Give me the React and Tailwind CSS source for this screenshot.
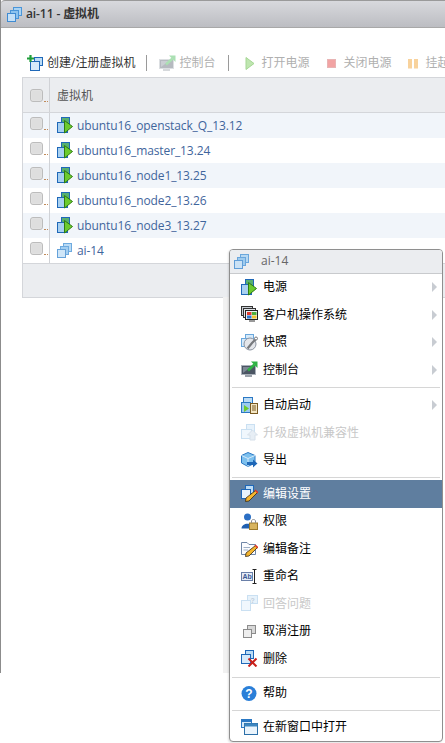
import React from "react";

const FONT = "font-['Open_Sans','Noto_Sans_CJK_SC',sans-serif]";

// stacked blue squares, used by most vm icons
const Squares = ({ pale }) => (
  <g opacity={pale ? 0.8 : 1}>
    <rect x="6.5" y="1.5" width="8" height="8" fill="#a9d3f3" stroke="#4a95d8" />
    <rect x="3.5" y="4.5" width="8" height="8" fill="#8cc3ee" stroke="#4a95d8" />
    <rect x="0.5" y="7.5" width="8" height="8" fill="#c4e0f7" stroke="#3f8bd2" />
  </g>
);

const Svg = ({ children, className = "" }) => (
  <svg width="17" height="17" viewBox="0 0 17 17" className={`shrink-0 ${className}`}>
    {children}
  </svg>
);

const VmOn = () => (
  <Svg>
    <rect x="4.5" y="0.5" width="8" height="8" fill="#58b070" stroke="#1f68b8" />
    <rect x="0.5" y="5.5" width="10" height="10" fill="#a8d0f0" stroke="#1f68b8" />
    <path d="M7.5 3.5 L15.5 9.5 L7.5 16 Z" fill="#6ccb2e" stroke="#2f7d12" />
  </Svg>
);

const VmPlain = ({ pale }) => (
  <Svg>
    <Squares pale={pale} />
  </Svg>
);

const GuestOs = () => (
  <Svg>
    <rect x="0.5" y="0.5" width="11" height="9" fill="#c9ced4" stroke="#333" />
    <rect x="2.5" y="2.5" width="12" height="9" fill="#dfe3e7" stroke="#333" />
    <rect x="4.5" y="4.5" width="12" height="9" fill="#eceff2" stroke="#222" />
    <rect x="6" y="6" width="4.5" height="3" fill="#e23b2e" />
    <rect x="11" y="6" width="4.5" height="3" fill="#4caf3a" />
    <rect x="6" y="9.5" width="4.5" height="3" fill="#2f78d0" />
    <rect x="11" y="9.5" width="4.5" height="3" fill="#f2c12e" />
    <rect x="8" y="14" width="6" height="2" fill="#999" />
  </Svg>
);

const Snapshot = () => (
  <Svg>
    <rect x="4.5" y="0.5" width="8" height="7" fill="#d6eafa" stroke="#6aa7dc" />
    <rect x="0.5" y="4.5" width="7" height="8" fill="#d6eafa" stroke="#6aa7dc" />
    <circle cx="9" cy="10" r="6" fill="#e4e6ea" stroke="#8b93a0" />
    <path d="M15 5 L11 9 L6.5 14.5" stroke="#77797d" strokeWidth="2.2" fill="none" />
    <circle cx="15" cy="4.5" r="1.5" fill="#fff" stroke="#77797d" />
  </Svg>
);

const Console = ({ pale }) => (
  <Svg>
    <g opacity={pale ? 0.4 : 1}>
      <rect x="0.5" y="4.5" width="14" height="9" fill="#4b5563" stroke="#a9b0b9" />
      <path d="M2 6 H10 L2 12 Z" fill="#7c8794" />
      <rect x="4" y="14" width="7" height="2" fill="#9aa1aa" />
      <path d="M7 9.5 L13.5 3.5" stroke="#2fb344" strokeWidth="2.5" />
      <path d="M10 0.5 H16.5 V7 Z" fill="#2fb344" />
    </g>
  </Svg>
);

const AutoStart = () => (
  <Svg>
    <rect x="2.5" y="0.5" width="9" height="8" fill="#bcdcf5" stroke="#2b78c4" />
    <rect x="0.5" y="5.5" width="9" height="10" fill="#9ccbef" stroke="#2b78c4" />
    <path d="M3 8 L8 11.5 L3 15 Z" fill="#6ccb2e" />
    <rect x="9.5" y="6.5" width="7" height="10" fill="#f3e6c4" stroke="#7a5a22" />
    <path d="M11 9 H15 M11 11 H15 M11 13 H15" stroke="#7a5a22" />
  </Svg>
);

const Upgrade = () => (
  <Svg>
    <g opacity="0.35">
      <rect x="5.5" y="0.5" width="8" height="8" fill="#bcdcf5" stroke="#6aa7dc" />
      <rect x="0.5" y="5.5" width="10" height="9" fill="#d6eafa" stroke="#6aa7dc" />
      <path d="M11.5 6 L16.5 11 H14 V16 H9 V11 H6.5 Z" fill="#bcd0e4" stroke="#8ea9c4" />
    </g>
  </Svg>
);

const Export = () => (
  <Svg>
    <path d="M7 0.5 L14 3.5 V11 L7 14.5 L0.5 11 V3.5 Z" fill="#7cc0ee" stroke="#2b78c4" />
    <path d="M0.5 3.5 L7 6.5 L14 3.5 M7 6.5 V14.5" stroke="#d6eafa" fill="none" />
    <path d="M6 10 H12 V7.5 L16.5 11.5 L12 15.5 V13 H6 Z" fill="#1f68b8" />
  </Svg>
);

const Pencil = () => (
  <g>
    <path d="M14.5 5.5 L16.5 7.5 L8 16 L4.5 16.5 L5 13 Z" fill="#f4b52e" stroke="#3a2a10" strokeWidth="0.8" />
    <path d="M14 5 L17 8" stroke="#d9352a" strokeWidth="1.6" />
  </g>
);

const EditVm = () => (
  <Svg>
    <rect x="4.5" y="0.5" width="8" height="8" fill="#bcdcf5" stroke="#1f68b8" />
    <rect x="0.5" y="4.5" width="9" height="9" fill="#e8f3fc" stroke="#1f68b8" />
    <Pencil />
  </Svg>
);

const Perm = () => (
  <Svg>
    <circle cx="6.5" cy="4" r="3.5" fill="#2b6fc4" />
    <path d="M0.5 15.5 C0.5 9 12.5 9 12.5 15.5 Z" fill="#1f5fb0" />
    <rect x="8.5" y="10" width="8" height="6.5" fill="#d8b45e" stroke="#9c7a2a" />
    <path d="M10.5 10 V8 C10.5 6 14.5 6 14.5 8 V10" stroke="#8f8f8f" fill="none" />
  </Svg>
);

const EditNote = () => (
  <Svg>
    <path d="M0.5 2.5 H6 L8 4.5 H14.5 V14.5 H0.5 Z" fill="#fbfcfe" stroke="#6f86a6" />
    <path d="M2.5 7.5 H9 M2.5 10 H7" stroke="#9fb0c6" />
    <Pencil />
  </Svg>
);

const Rename = () => (
  <Svg>
    <rect x="0.5" y="4.5" width="11" height="8" fill="#e6ecf6" stroke="#6a7fa8" />
    <path d="M13.5 1.5 V15.5 M11.5 1.5 H15.5 M11.5 15.5 H15.5" stroke="#222" />
    <text x="1.5" y="11" fontSize="7" fontWeight="700" fill="#3a5a94" fontFamily="Liberation Sans">Ab</text>
  </Svg>
);

const Answer = () => (
  <Svg>
    <g opacity="0.35">
      <rect x="6.5" y="0.5" width="10" height="8" fill="#bcdcf5" stroke="#6aa7dc" />
      <rect x="0.5" y="5.5" width="9" height="10" fill="#d6eafa" stroke="#6aa7dc" />
      <text x="9.5" y="7.5" fontSize="7" fontWeight="700" fill="#4b6f94" fontFamily="Liberation Sans">?</text>
    </g>
  </Svg>
);

const Unregister = () => (
  <Svg>
    <rect x="6.5" y="2.5" width="8" height="8" fill="#d8d8d8" stroke="#8c8c8c" />
    <rect x="2.5" y="6.5" width="8" height="8" fill="#eeeeee" stroke="#8c8c8c" />
  </Svg>
);

const Delete = () => (
  <Svg>
    <rect x="4.5" y="0.5" width="8" height="8" fill="#bcdcf5" stroke="#1f68b8" />
    <rect x="0.5" y="4.5" width="9" height="9" fill="#d6eafa" stroke="#1f68b8" />
    <path d="M7.5 8.5 L15.5 16.5 M15.5 8.5 L7.5 16.5" stroke="#c9201a" strokeWidth="2" />
  </Svg>
);

const Help = () => (
  <Svg>
    <circle cx="8" cy="8.5" r="7.5" fill="#2a7fd8" />
    <text x="8" y="13" textAnchor="middle" fontSize="12" fontWeight="700" fill="#fff" fontFamily="Liberation Sans">?</text>
  </Svg>
);

const NewWindow = () => (
  <Svg>
    <rect x="0.5" y="0.5" width="10" height="8" fill="#d6eafa" stroke="#2b78c4" />
    <rect x="0.5" y="0.5" width="10" height="2.5" fill="#2b78c4" />
    <rect x="3.5" y="4.5" width="13" height="11" fill="#eaf4fc" stroke="#2b6fa8" />
    <rect x="3.5" y="4.5" width="13" height="3" fill="#3d86c0" />
  </Svg>
);

const CreateVm = () => (
  <Svg>
    <rect x="7.5" y="2.5" width="8" height="8" fill="#bcdcf5" stroke="#1f68b8" />
    <rect x="3.5" y="6.5" width="9" height="9" fill="#d6eafa" stroke="#1f68b8" />
    <path d="M3.5 0 V7 M0 3.5 H7" stroke="#1f9e3a" strokeWidth="2.2" />
  </Svg>
);

const vms = [
  "ubuntu16_openstack_Q_13.12",
  "ubuntu16_master_13.24",
  "ubuntu16_node1_13.25",
  "ubuntu16_node2_13.26",
  "ubuntu16_node3_13.27",
];

const Check = ({ top }) => (
  <div className="w-[27px] h-full shrink-0 border-r border-[#d0d2d6] relative">
    <div className={`absolute left-[7px] ${top} w-[13px] h-[13px] rounded-[3px] border border-[#bcbcbc] bg-[#dedede] shadow-[inset_0_0_1px_#fff]`} />
    <div className={`absolute left-[21px] ${top} mt-[12px] w-[4px] h-px border-t border-dotted border-[#c08a5a]`} />
  </div>
);

const Row = ({ name, striped, plain }) => (
  <div className={`h-[25px] flex items-center ${striped ? "bg-[#f1f5fa]" : "bg-white"}`}>
    <Check top="top-[4px]" />
    <div className="pl-[7px] flex items-center gap-[3px]">
      {plain ? <VmPlain pale /> : <VmOn />}
      <span className="text-[12px] text-[#3f659c] tracking-[-0.1px]">{name}</span>
    </div>
  </div>
);

const MenuRow = ({ icon, label, arrow, disabled, active }) => (
  <div className={`h-[27.5px] flex items-center pl-[11px] pr-[5px] ${active ? "bg-[#5f7e9f] text-white" : disabled ? "text-[#c8c8c8]" : "text-black"}`}>
    <div className="w-[22px] shrink-0">{icon}</div>
    <span className="text-[12px] flex-1">{label}</span>
    {arrow && <div className="w-0 h-0 border-y-[5px] border-y-transparent border-l-[5px] border-l-[#c8ccd2]" />}
  </div>
);

const Sep = ({ className }) => <div className={`h-px bg-[#d6d6d6] mx-[2px] ${className}`} />;

const ToolItem = ({ icon, label, disabled, className = "" }) => (
  <div className={`flex items-center gap-[3px] shrink-0 ${className}`}>
    {icon}
    <span className={`text-[12px] ${disabled ? "text-[#b0b0b0]" : "text-[#333]"}`}>{label}</span>
  </div>
);

export default function App() {
  return (
    <div className={`${FONT} w-[445px] h-[743px] bg-white overflow-hidden relative`}>
      <div className="h-[673px] border-l border-[#8c8c8c] flex flex-col">
        {/* title bar */}
        <div className="h-[28px] shrink-0 rounded-tl-[4px] border-t border-[#9a9a9a] border-b border-b-[#a8a8a8] bg-gradient-to-b from-[#d8d9dd] to-[#bcbdc2] flex items-center pl-[6px] gap-[2px]">
          <VmPlain />
          <span className="text-[12px] font-semibold text-[#333] tracking-[-0.1px]">ai-11 - 虚拟机</span>
        </div>

        {/* toolbar */}
        <div className="h-[49px] shrink-0 flex items-center pl-[26px] pt-[21px] overflow-hidden whitespace-nowrap">
          <ToolItem icon={<CreateVm />} label="创建/注册虚拟机" />
          <div className="w-px h-[16px] bg-[#9a9a9a] ml-[11px] shrink-0" />
          <ToolItem disabled className="ml-[12px]" icon={<Console pale />} label="控制台" />
          <div className="w-px h-[16px] bg-[#9a9a9a] ml-[13px] shrink-0" />
          <ToolItem
            disabled
            className="ml-[12px]"
            icon={<Svg><path d="M5 2.5 L13 8.5 L5 14.5 Z" fill="#bfe6b0" stroke="#a5d694" /></Svg>}
            label="打开电源"
          />
          <ToolItem
            disabled
            className="ml-[14px]"
            icon={<Svg><rect x="4.5" y="4.5" width="8" height="8" fill="#f2a3a3" stroke="#e8b4b4" /></Svg>}
            label="关闭电源"
          />
          <ToolItem
            disabled
            className="ml-[14px]"
            icon={<Svg><path d="M3 4 H7 V13.5 H3 Z M9 4 H13 V13.5 H9 Z" fill="#f8d29c" /></Svg>}
            label="挂起"
          />
        </div>

        {/* vm table */}
        <div className="ml-[21px] border border-[#d4d6da] border-r-0 h-[221px] flex flex-col">
          <div className="h-[35px] shrink-0 bg-[#ebedf0] border-b border-[#d4d6da] flex items-center">
            <Check top="top-[11px]" />
            <span className="pl-[7px] pt-[2px] text-[12px] text-[#555]">虚拟机</span>
          </div>
          {vms.map((v, i) => (
            <Row key={v} name={v} striped={i % 2 === 0} />
          ))}
          <Row name="ai-14" plain />
          <div className="flex-1 bg-[#ebedf0] border-t border-[#d4d6da]" />
        </div>
      </div>

      {/* shadow band the menu leaves on the window */}
      <div className="absolute left-[223px] top-[297px] w-[6px] h-[376px] bg-[#f1f1f1]" />

      {/* context menu */}
      <div className="absolute left-[229px] top-[249px] w-[214px] h-[493px] bg-white border border-[#8f8f8f] rounded-[4px] shadow-[-1px_1px_2px_rgba(0,0,0,0.12)] overflow-hidden">
        <div className="h-[23.5px] bg-[#ebedf0] border-b border-[#c8cacd] flex items-center pl-[4px] gap-[10px]">
          <VmPlain pale />
          <span className="text-[12px] text-[#666]">ai-14</span>
        </div>
        <MenuRow icon={<VmOn />} label="电源" arrow />
        <MenuRow icon={<GuestOs />} label="客户机操作系统" arrow />
        <MenuRow icon={<Snapshot />} label="快照" arrow />
        <MenuRow icon={<Console />} label="控制台" arrow />
        <Sep className="mt-[3.5px] mb-[3.5px]" />
        <MenuRow icon={<AutoStart />} label="自动启动" arrow />
        <MenuRow icon={<Upgrade />} label="升级虚拟机兼容性" disabled />
        <MenuRow icon={<Export />} label="导出" />
        <Sep className="mt-[2.5px] mb-[2.5px]" />
        <MenuRow icon={<EditVm />} label="编辑设置" active />
        <MenuRow icon={<Perm />} label="权限" />
        <MenuRow icon={<EditNote />} label="编辑备注" />
        <MenuRow icon={<Rename />} label="重命名" />
        <MenuRow icon={<Answer />} label="回答问题" disabled />
        <MenuRow icon={<Unregister />} label="取消注册" />
        <MenuRow icon={<Delete />} label="删除" />
        <Sep className="mt-[4px] mb-[2px]" />
        <MenuRow icon={<Help />} label="帮助" />
        <Sep className="mt-[3px] mb-[2.5px]" />
        <MenuRow icon={<NewWindow />} label="在新窗口中打开" />
      </div>
    </div>
  );
}
